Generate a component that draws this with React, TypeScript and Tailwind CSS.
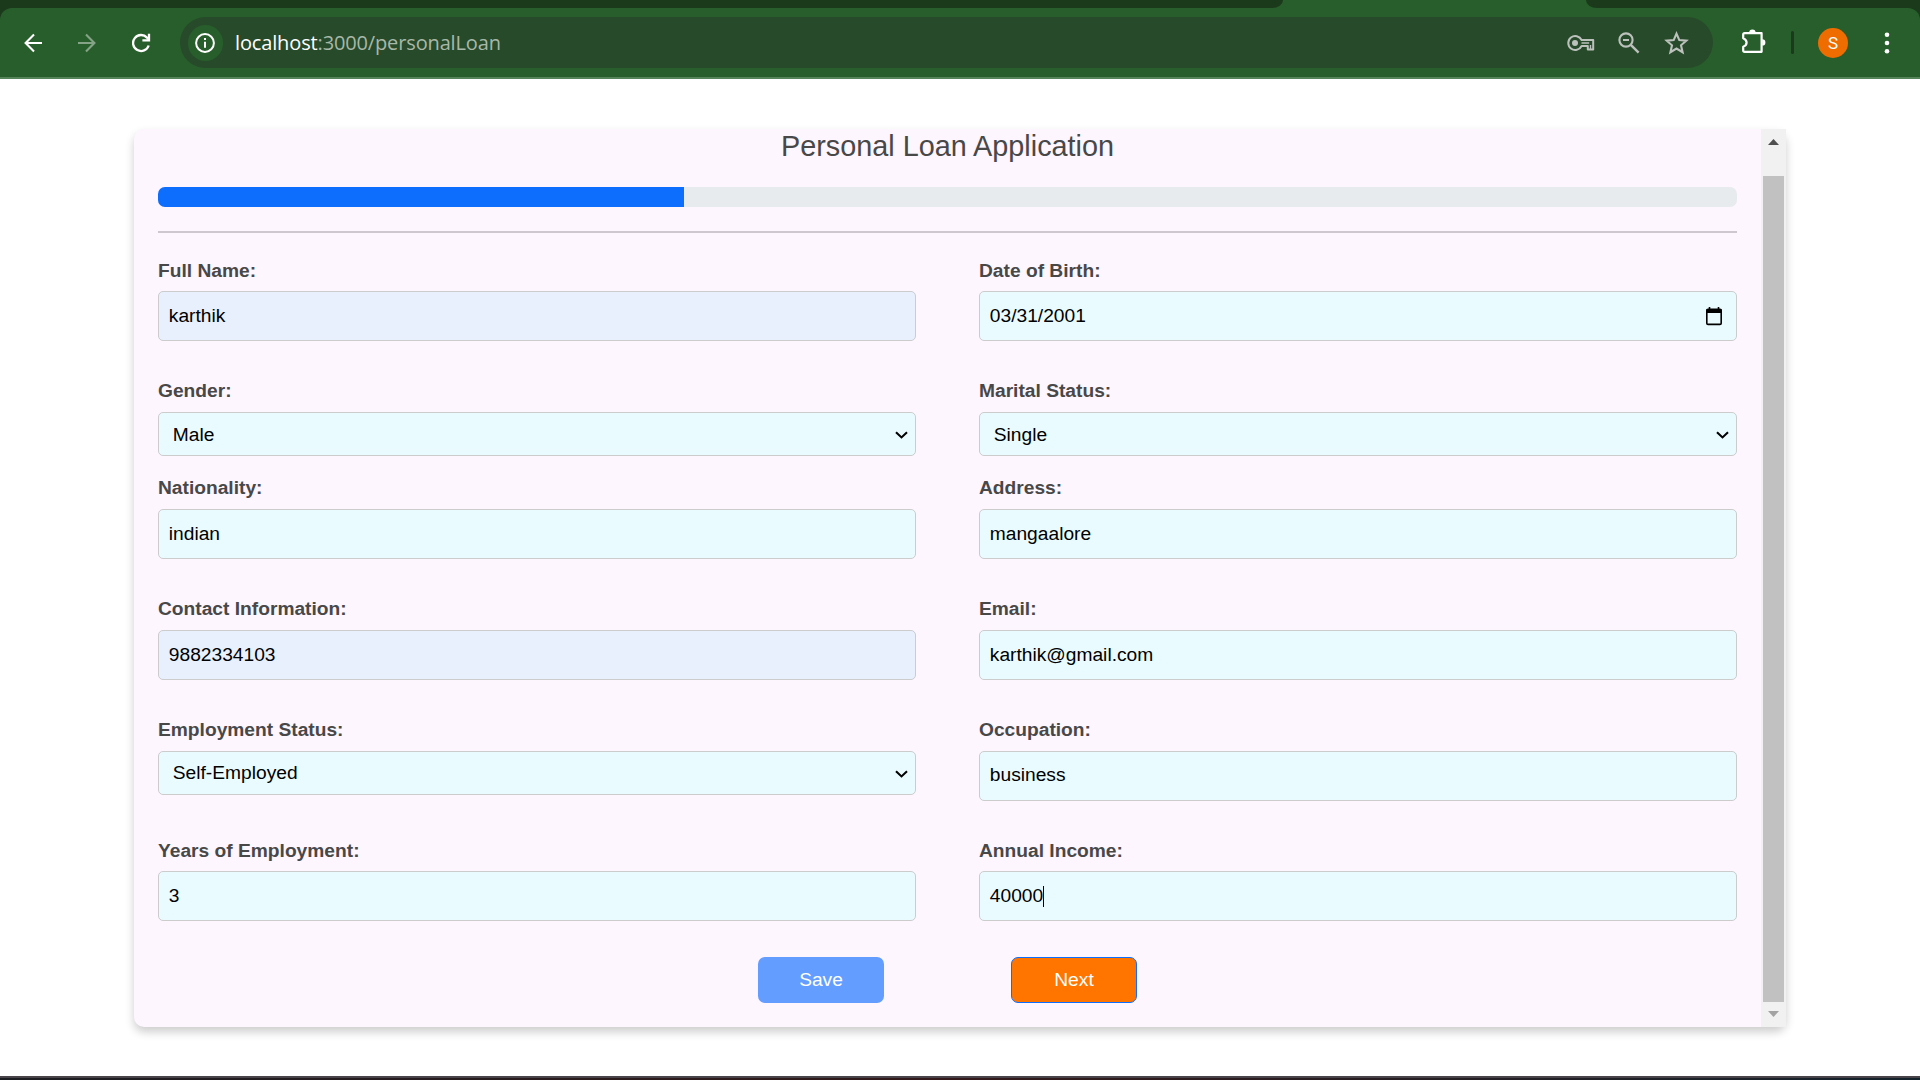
import React from "react";

type FieldKind = "text" | "date" | "select";

interface FieldData {
  label: string;
  value: string;
  kind: FieldKind;
  autofilled?: boolean;
  focused?: boolean;
  raised?: boolean;
}

interface RowData {
  height: string;
  left: FieldData;
  right: FieldData;
}

const rows: RowData[] = [
  {
    height: "h-[120px] mt-px",
    left: { label: "Full Name:", value: "karthik", kind: "text", autofilled: true },
    right: { label: "Date of Birth:", value: "03/31/2001", kind: "date" },
  },
  {
    height: "h-[97px]",
    left: { label: "Gender:", value: "Male", kind: "select" },
    right: { label: "Marital Status:", value: "Single", kind: "select" },
  },
  {
    height: "h-[121px]",
    left: { label: "Nationality:", value: "indian", kind: "text" },
    right: { label: "Address:", value: "mangaalore", kind: "text" },
  },
  {
    height: "h-[121px]",
    left: { label: "Contact Information:", value: "9882334103", kind: "text", autofilled: true },
    right: { label: "Email:", value: "karthik@gmail.com", kind: "text" },
  },
  {
    height: "h-[121px]",
    left: { label: "Employment Status:", value: "Self-Employed", kind: "select", raised: true },
    right: { label: "Occupation:", value: "business", kind: "text", raised: true },
  },
  {
    height: "h-[85px]",
    left: { label: "Years of Employment:", value: "3", kind: "text" },
    right: { label: "Annual Income:", value: "40000", kind: "text", focused: true },
  },
];

// The first and last rows have a label box one pixel shorter than the others.
const compactLabels = new Set(["Full Name:", "Date of Birth:", "Years of Employment:", "Annual Income:"]);

function CalendarIcon() {
  return (
    <svg className="mr-[5px] mt-px h-[19px] w-[16px]" viewBox="0 0 16 19" fill="none">
      <path d="M3.5 0v3M12.5 0v3" stroke="#000" strokeWidth="1.6" />
      <rect x="0.8" y="2.4" width="14.4" height="15" rx="1.2" stroke="#000" strokeWidth="1.6" />
      <path d="M0.5 2h15v4h-15z" fill="#000" />
    </svg>
  );
}

function Chevron() {
  return (
    <svg className="mt-px h-[8px] w-[13px]" viewBox="0 0 13 8" fill="none">
      <path d="M1 1.2l5.5 5.2L12 1.2" stroke="#000" strokeWidth="2.1" />
    </svg>
  );
}

function Field({ label, value, kind, autofilled, focused, raised }: FieldData) {
  return (
    <div className="flex w-[758px] flex-col">
      <div
        className={`text-[19.2px] font-bold leading-[28px] text-[#484848] ${
          compactLabels.has(label) ? "h-[34px]" : "h-[35px]"
        }`}
      >
        {label}
      </div>
      {kind === "select" ? (
        <div className="flex h-[44px] items-center justify-between rounded-[5px] border border-[#cccccc] bg-[#eafbff] pl-[13.8px] pr-[7px] text-[19.2px] leading-[22px] text-black">
          <span className={raised ? "" : "pt-[2px]"}>{value}</span>
          <Chevron />
        </div>
      ) : (
        <div
          className={`flex h-[50px] items-center justify-between rounded-[5px] border border-[#cccccc] pl-[9.8px] pr-[9px] text-[19.2px] leading-[22px] text-black ${
            autofilled ? "bg-[#e8f0fe]" : "bg-[#eafbff]"
          }`}
        >
          <span className={`flex items-center ${raised ? "pb-[2px]" : ""}`}>
            {value}
            {focused && <span className="h-[21px] w-px bg-black" />}
          </span>
          {kind === "date" && <CalendarIcon />}
        </div>
      )}
    </div>
  );
}

function BrowserBar() {
  return (
    <header className="shrink-0 bg-[#1b391b]">
      <div className="flex h-2 justify-between bg-[#285e2b]">
        <div className="w-[1283px] bg-[#1b391b] [border-bottom-right-radius:11px_8px]" />
        <div className="w-[334px] bg-[#1b391b] [border-bottom-left-radius:11px_8px]" />
      </div>
      <div className="flex h-[71px] items-center rounded-t-[12px] border-b-2 border-[#55845a] bg-[#285e2b] pl-[24px]">
        <svg className="h-[20px] w-[18px]" viewBox="0 0 18 20" fill="none" stroke="#fff" strokeWidth="2.1">
          <path d="M18 10H1.8M10 1.6L1.6 10l8.4 8.4" />
        </svg>
        <svg className="ml-[36px] h-[20px] w-[18px]" viewBox="0 0 18 20" fill="none" stroke="#85a386" strokeWidth="2.1">
          <path d="M0 10h16.2M8 1.6l8.4 8.4L8 18.4" />
        </svg>
        <svg className="ml-[36px] h-[20px] w-[19px]" viewBox="0 0 19 20" fill="none" stroke="#fff" strokeWidth="2.3">
          <path d="M16.7 12.5A8 8 0 1 1 15 4.6L16.8 6.4" />
          <path d="M17 0.8v6.6h-6.6" />
        </svg>
        <div className="ml-[29px] flex h-[51px] w-[1533px] items-center rounded-full bg-[#274a2a] pl-[8px]">
          <span className="flex h-[36px] w-[35px] items-center justify-center rounded-full bg-[#285e2b]">
            <svg className="mr-px h-[20px] w-[20px]" viewBox="0 0 20 20" fill="none" stroke="#fff">
              <circle cx="10" cy="10" r="8.9" strokeWidth="2" />
              <path d="M10 8.8v6M10 5v2" strokeWidth="2" />
            </svg>
          </span>
          <span className="ml-[12px] whitespace-nowrap pt-px font-['Open_Sans','Noto_Sans',sans-serif] text-[20px] leading-[28px] tracking-[-0.14px] text-[#a7b8a8]">
            <span className="text-white">localhost</span>:3000/personalLoan
          </span>
          <div className="ml-auto mr-[24px] flex items-center">
            <svg className="h-[18px] w-[28px]" viewBox="0 0 28 18" fill="none" stroke="#bcc1bc" strokeWidth="2">
              <path d="M14.6 6A7 7 0 1 0 14.6 12h6.2v3.6h5.4V6z" strokeLinejoin="round" />
              <circle cx="8" cy="9" r="3" fill="#bcc1bc" stroke="none" />
              <path d="M14.5 9h7.7M23.5 11v4" strokeWidth="1.4" />
            </svg>
            <svg className="ml-[23px] h-[22px] w-[22px]" viewBox="0 0 22 22" fill="none" stroke="#bcc1bc" strokeWidth="2.1">
              <circle cx="8" cy="8" r="6.6" />
              <path d="M5 8h6" strokeWidth="2" />
              <path d="M12.8 12.8l7.8 7.8" strokeWidth="2.4" />
            </svg>
            <svg className="ml-[24px] h-[24px] w-[25px]" viewBox="0 0 25 24" fill="none" stroke="#bcc1bc" strokeWidth="2.1">
              <path d="M12.5 2.6l2.8 6.5 7 .6-5.3 4.6 1.6 6.9-6.1-3.7-6.1 3.7 1.6-6.9-5.3-4.6 7-.6z" />
            </svg>
          </div>
        </div>
        <svg className="mb-[3px] ml-[28px] h-[25px] w-[26px]" viewBox="0 0 26 25" fill="none">
          <path
            d="M3.6 4.2H20.6V22.8H3.6Q2.2 22.8 2.2 21.4V17.8Q5.6 16.6 5.6 13.6T2.2 9.2V5.6Q2.2 4.2 3.6 4.2z"
            stroke="#fff"
            strokeWidth="2.2"
            strokeLinejoin="round"
          />
          <path d="M8.2 3.6a3.2 3.2 0 0 1 6.4 0zM21.2 10.2a3.2 3.2 0 0 1 0 6.4z" fill="#fff" />
        </svg>
        <span className="ml-[24px] h-[23px] w-[3px] rounded-full bg-[#1b391b]" />
        <span className="ml-[24px] flex h-[30px] w-[30px] items-center justify-center rounded-full bg-[#ef6c00] pt-px font-['Roboto',sans-serif] text-[17px] leading-none text-white">
          S
        </span>
        <svg className="ml-[34px] h-[22px] w-[10px]" viewBox="0 0 10 22" fill="#fff">
          <circle cx="5" cy="2.7" r="2.3" />
          <circle cx="5" cy="11" r="2.3" />
          <circle cx="5" cy="19.3" r="2.3" />
        </svg>
      </div>
    </header>
  );
}

function Scrollbar() {
  return (
    <div className="flex h-full w-[25px] flex-col items-center bg-[#f1f1f1]">
      <svg className="mt-[10px] h-[6px] w-[11px] shrink-0" viewBox="0 0 11 6">
        <path d="M5.5 0L11 6H0z" fill="#505050" />
      </svg>
      <div className="mt-[31px] h-[826px] w-[21px] shrink-0 bg-[#c1c1c1]" />
      <svg className="mt-[9px] h-[6px] w-[11px] shrink-0" viewBox="0 0 11 6">
        <path d="M0 0H11L5.5 6z" fill="#a3a3a3" />
      </svg>
    </div>
  );
}

export default function App() {
  return (
    <div className="flex h-[1080px] w-[1920px] flex-col overflow-hidden bg-white font-['Liberation_Sans',Arial,sans-serif]">
      <BrowserBar />
      <main className="flex-1 pl-[134px] pt-[50px]">
        <div className="flex h-[898px] w-[1652px] rounded-[10px] bg-[#fdf6ff] shadow-[0_5px_10px_rgba(0,0,0,0.2)]">
          <section className="w-[1627px] px-[24px]">
            <h1 className="h-[58px] text-center text-[28.8px] leading-[34px] text-[#484848]">Personal Loan Application</h1>
            <div className="h-[20px] overflow-hidden rounded-[7px] bg-[#e8ebee]">
              <div className="h-full w-1/3 bg-[#0d6efd]" />
            </div>
            <div className="mt-[24px] h-[2px] bg-[#cec7cf]" />
            <div className="flex flex-col pt-[23px]">
              {rows.map((row) => (
                <div key={row.left.label} className={`flex justify-between ${row.height}`}>
                  <Field {...row.left} />
                  <Field {...row.right} />
                </div>
              ))}
            </div>
            <div className="mt-[35px] flex justify-center gap-[127px] text-[19.2px] leading-none text-white">
              <button className="h-[46px] w-[126px] rounded-[7px] bg-[#629dff]">Save</button>
              <button className="h-[46px] w-[126px] rounded-[7px] border border-[#0d6efd] bg-[#ff7500]">Next</button>
            </div>
          </section>
          <Scrollbar />
        </div>
      </main>
      <footer className="h-[4px] shrink-0 border-t-2 border-[#48444a] bg-linear-to-r from-[#1c1d22] via-[#33191a] to-[#14222c]" />
    </div>
  );
}
